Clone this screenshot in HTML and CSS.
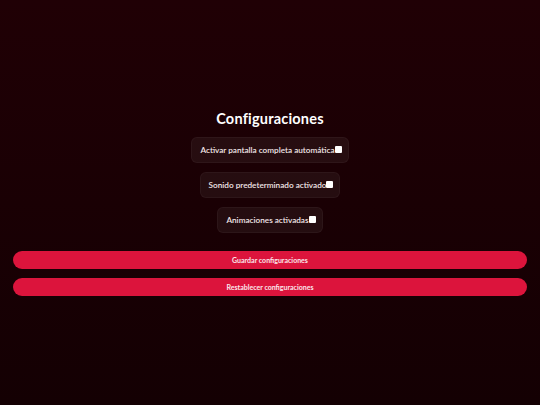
FILE: index.html
```html
<!DOCTYPE html>
<html lang="es">
<head>
<meta charset="utf-8">
<title>Configuraciones</title>
<link rel="stylesheet" href="styles.css">
</head>
<body>
<main class="settings">
  <h1 class="title">Configuraciones</h1>
  <div class="options">
    <label class="option">Activar pantalla completa automática<input type="checkbox" class="check"></label>
    <label class="option">Sonido predeterminado activado<input type="checkbox" class="check"></label>
    <label class="option">Animaciones activadas<input type="checkbox" class="check"></label>
  </div>
  <div class="actions">
    <button class="btn">Guardar configuraciones</button>
    <button class="btn">Restablecer configuraciones</button>
  </div>
</main>
</body>
</html>
```

FILE: styles.css
```css
html, body {
  margin: 0;
  padding: 0;
  height: 100%;
}
body {
  background: linear-gradient(180deg, #200005 0%, #140003 100%);
  font-family: Lato, "Liberation Sans", sans-serif;
  color: #ffffff;
  min-height: 100vh;
  display: flex;
  align-items: center;
  justify-content: center;
}
.settings {
  width: 100%;
  padding: 0 13px 0 13px;
  box-sizing: border-box;
  display: flex;
  flex-direction: column;
  align-items: center;
}
.title {
  margin: 0 0 9px 0;
  font-size: 14.5px;
  font-weight: 700;
  line-height: 18px;
  letter-spacing: 0.2px;
}
.options {
  display: flex;
  flex-direction: column;
  align-items: center;
  gap: 9px;
}
.option {
  display: flex;
  align-items: center;
  height: 26px;
  box-sizing: border-box;
  padding: 0 6px 0 8px;
  background: rgba(255, 255, 255, 0.05);
  border: 1px solid rgba(255, 255, 255, 0.04);
  border-radius: 6px;
  font-size: 8.2px;
  font-weight: 600;
  color: #f2e6e8;
}
.check {
  appearance: none;
  -webkit-appearance: none;
  margin: 0;
  width: 7px;
  height: 7px;
  background: #ffffff;
  border-radius: 1px;
  border: none;
}
.actions {
  width: 100%;
  display: flex;
  flex-direction: column;
  gap: 9px;
  margin-top: 18px;
}
.btn {
  width: 100%;
  height: 18px;
  border: none;
  border-radius: 9px;
  background: #dc143c;
  color: #fbe6ea;
  font-family: Lato, "Liberation Sans", sans-serif;
  font-size: 7px;
  font-weight: 700;
  padding: 0;
}
```
